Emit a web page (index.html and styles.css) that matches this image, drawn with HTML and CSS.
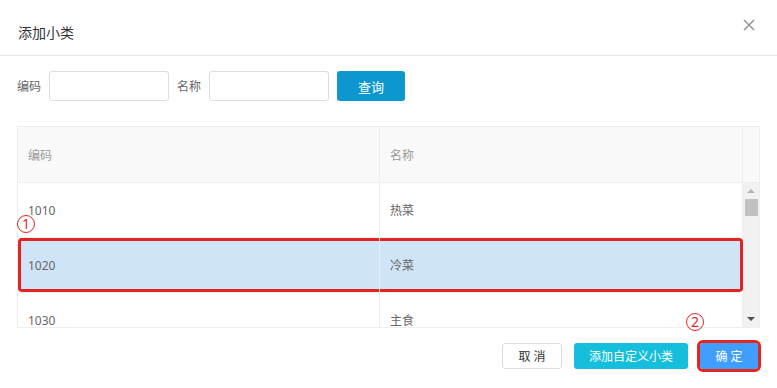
FILE: index.html
```html
<!DOCTYPE html>
<html lang="zh-CN">
<head>
    <meta charset="UTF-8">
    <title>添加小类</title>
    <link rel="stylesheet" href="styles.css">
</head>
<body>
    <div class="dialog">
        <div class="dialog-header">
            <span class="dialog-title">添加小类</span>
            <svg class="close" width="12" height="12" viewBox="0 0 12 12">
                <path d="M1 1 L11 11 M11 1 L1 11" stroke="#999" stroke-width="1.6" fill="none"/>
            </svg>
        </div>

        <div class="search-bar">
            <label>编码</label>
            <input type="text" class="search-input">
            <label>名称</label>
            <input type="text" class="search-input">
            <button class="btn btn-search">查询</button>
        </div>

        <div class="table">
            <div class="table-head">
                <div class="cell">编码</div>
                <div class="cell">名称</div>
                <div class="cell gutter"></div>
            </div>
            <div class="table-body">
                <div class="rows">
                    <div class="row">
                        <div class="cell">1010</div>
                        <div class="cell">热菜</div>
                    </div>
                    <div class="row selected">
                        <div class="cell">1020</div>
                        <div class="cell">冷菜</div>
                    </div>
                    <div class="row">
                        <div class="cell">1030</div>
                        <div class="cell">主食</div>
                    </div>
                </div>
                <div class="scrollbar">
                    <span class="arrow arrow-up"></span>
                    <span class="thumb"></span>
                    <span class="track"></span>
                    <span class="arrow arrow-down"></span>
                </div>
            </div>
        </div>

        <div class="dialog-footer">
            <button class="btn btn-default">取 消</button>
            <button class="btn btn-custom">添加自定义小类</button>
            <button class="btn btn-primary marked">确 定</button>
        </div>

        <!-- annotation marks -->
        <span class="mark mark-one">1</span>
        <span class="mark mark-two">2</span>
    </div>
</body>
</html>
```

FILE: styles.css
```css
/* General */
body {
    margin: 0;
    padding: 0;
    background: #fff;
    font-family: "Noto Sans", "Noto Sans CJK SC", sans-serif;
    color: #666;
}

.dialog {
    position: relative;
    width: 777px;
    height: 388px;
    overflow: hidden;
}

/* Header */
.dialog-header {
    height: 56px;
    display: flex;
    align-items: center;
    justify-content: space-between;
    padding: 0 22px 0 18px;
    border-bottom: 1px solid #e8e8e8;
    box-sizing: border-box;
}

.dialog-title {
    font-size: 14px;
    color: #333;
    margin-top: 9px;
}

.close {
    margin-top: -6px;
}

/* Search */
.search-bar {
    display: flex;
    align-items: center;
    padding: 15px 17px 0;
    height: 30px;
}

.search-bar label {
    font-size: 12px;
    color: #666;
    margin-right: 8px;
}

.search-input {
    width: 120px;
    height: 30px;
    box-sizing: border-box;
    border: 1px solid #ddd;
    border-radius: 3px;
    margin: 0 8px 0 0;
    padding: 0;
}

.btn {
    font-family: "Noto Sans", "Noto Sans CJK SC", sans-serif;
    font-size: 12px;
    border: none;
    border-radius: 3px;
    padding: 0;
    cursor: pointer;
}

.btn-search {
    width: 68px;
    height: 30px;
    background: #0c98cf;
    color: #fff;
    font-size: 13px;
}

/* Table */
.table {
    margin: 25px 17px 0;
    width: 743px;
    border: 1px solid #eee;
    border-bottom: none;
    box-sizing: border-box;
}

.table-head {
    display: grid;
    grid-template-columns: 362px 363px 1fr;
    height: 55px;
    background: #f9f9f9;
    border-bottom: 1px solid #eee;
}

.table-head .cell {
    color: #999;
}

.cell {
    display: flex;
    align-items: center;
    padding-left: 10px;
    font-size: 12px;
    border-right: 1px solid #eee;
}

.table-head .gutter {
    border-right: none;
    padding: 0;
}

.table-body {
    display: flex;
    height: 144px;
    overflow: hidden;
    border-bottom: 1px solid #eee;
}

.rows {
    width: 725px;
}

.row {
    display: grid;
    grid-template-columns: 362px 363px;
    height: 55px;
    border-bottom: 1px solid #eee;
    box-sizing: border-box;
}

.row.selected {
    background: #cfe4f7;
    box-shadow: inset 0 0 0 3px #e3251f;
    border-radius: 4px;
}

.row.selected .cell {
    border-right-color: #e6eef6;
}

.row.selected .cell:last-child {
    border-right: none;
}

/* Fake scrollbar */
.scrollbar {
    flex: 1;
    display: flex;
    flex-direction: column;
    align-items: center;
    background: #f1f1f1;
    padding: 6px 0 6px;
}

.arrow {
    width: 0;
    height: 0;
    border-left: 4px solid transparent;
    border-right: 4px solid transparent;
}

.arrow-up {
    border-bottom: 4px solid #b5b5b5;
}

.arrow-down {
    border-top: 4px solid #505050;
}

.thumb {
    width: 13px;
    height: 17px;
    background: #c1c1c1;
    margin-top: 6px;
}

.track {
    flex: 1;
}

/* Footer */
.dialog-footer {
    display: flex;
    justify-content: flex-end;
    gap: 12px;
    padding: 15px 19px 0 0;
}

.btn-default {
    width: 60px;
    height: 26px;
    background: #fff;
    border: 1px solid #ddd;
    color: #333;
}

.btn-custom {
    width: 114px;
    height: 26px;
    background: #15bfdc;
    color: #fff;
}

.btn-primary {
    width: 58px;
    height: 26px;
    background: #409eff;
    color: #fff;
}

.marked {
    outline: 3px solid #e3251f;
}

/* Annotation marks */
.mark {
    position: absolute;
    width: 16px;
    height: 16px;
    border: 1px solid #e3251f;
    border-radius: 50%;
    color: #e3251f;
    font-size: 14px;
    line-height: 16px;
    text-align: center;
}

.mark-one {
    left: 17px;
    top: 215px;
}

.mark-two {
    left: 686px;
    top: 313px;
}
```
